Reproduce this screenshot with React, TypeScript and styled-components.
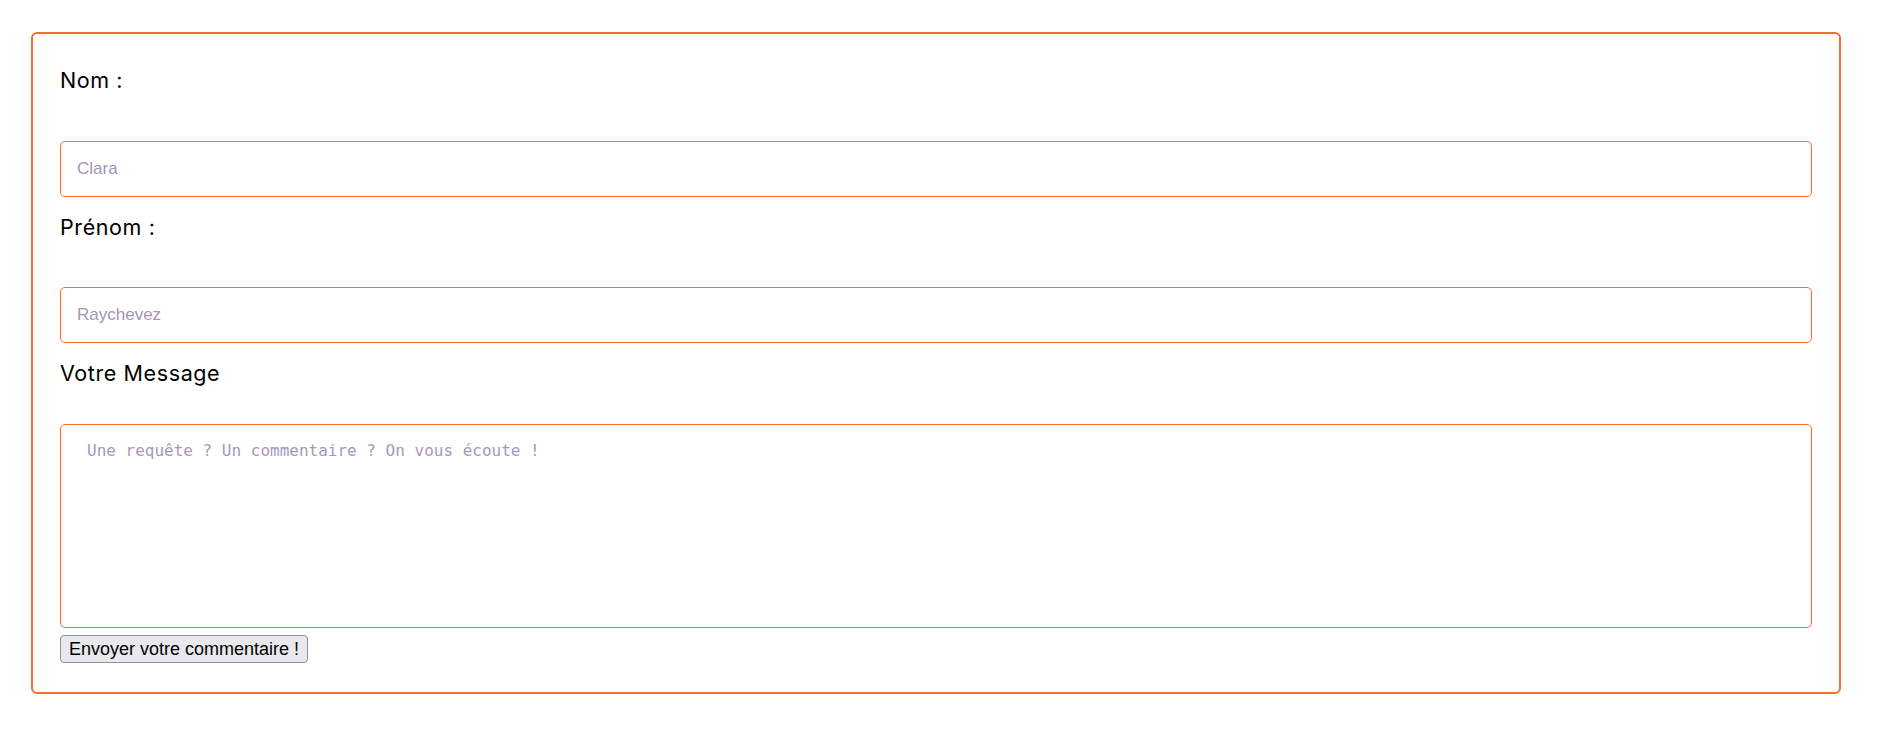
import React from "react";
import styled, { createGlobalStyle } from "styled-components";

const Global = createGlobalStyle`
  html, body {
    margin: 0;
    padding: 0;
    background: #ffffff;
  }
  body {
    font-family: "Inter", "Liberation Sans", sans-serif;
  }
  * { box-sizing: border-box; }
`;

const Card = styled.form`
  display: flex;
  flex-direction: column;
  align-items: stretch;
  margin: 32px 41px 0 31px;
  padding: 32px 27px 29px 27px;
  border: 2px solid #ff6b2b;
  border-radius: 6px;
`;

const Label = styled.label<{ $gap: number }>`
  display: block;
  font-family: "Inter", "Open Sans", sans-serif;
  font-size: 21.5px;
  letter-spacing: 0.6px;
  line-height: 24px;
  padding-top: 2px;
  font-weight: 400;
  color: #000000;
  margin-bottom: ${(p) => p.$gap}px;
`;

const TextInput = styled.input`
  display: block;
  width: 100%;
  height: 56px;
  margin: 0 0 16px 0;
  padding: 0 16px;
  border: 1px solid #ff6d2e;
  border-radius: 5px;
  font-family: "Liberation Sans", Arial, sans-serif;
  font-size: 17px;
  color: #3a2a4a;
  background: #ffffff;
  outline: none;
  &::placeholder {
    color: #a493b8;
    opacity: 1;
  }
`;

const MessageArea = styled.textarea`
  display: block;
  width: 100%;
  height: 204px;
  margin: 0 0 7px 0;
  padding: 16px 26px;
  border: 1px solid #ff6d2e;
  border-radius: 5px;
  font-family: "DejaVu Sans Mono", monospace;
  font-size: 16px;
  line-height: normal;
  color: #3a2a4a;
  background: #ffffff;
  resize: none;
  outline: none;
  &::placeholder {
    color: #a797bb;
    opacity: 1;
  }
`;

const SubmitButton = styled.button`
  align-self: flex-start;
  padding: 2px 8px;
  border: 1px solid #8f8f9d;
  border-radius: 4px;
  background: #e9e9ed;
  color: #000000;
  font-family: "Liberation Sans", Arial, sans-serif;
  font-size: 18px;
  line-height: 22px;
  cursor: pointer;
`;

export default function App() {
  return (
    <>
      <Global />
      <Card onSubmit={(e) => e.preventDefault()}>
        <Label $gap={49} htmlFor="nom">Nom :</Label>
        <TextInput id="nom" type="text" placeholder="Clara" />
        <Label $gap={48} htmlFor="prenom">Prénom :</Label>
        <TextInput id="prenom" type="text" placeholder="Raychevez" />
        <Label $gap={39} htmlFor="message">Votre Message</Label>
        <MessageArea
          id="message"
          placeholder="Une requête ? Un commentaire ? On vous écoute !"
        />
        <SubmitButton type="submit">Envoyer votre commentaire !</SubmitButton>
      </Card>
    </>
  );
}
